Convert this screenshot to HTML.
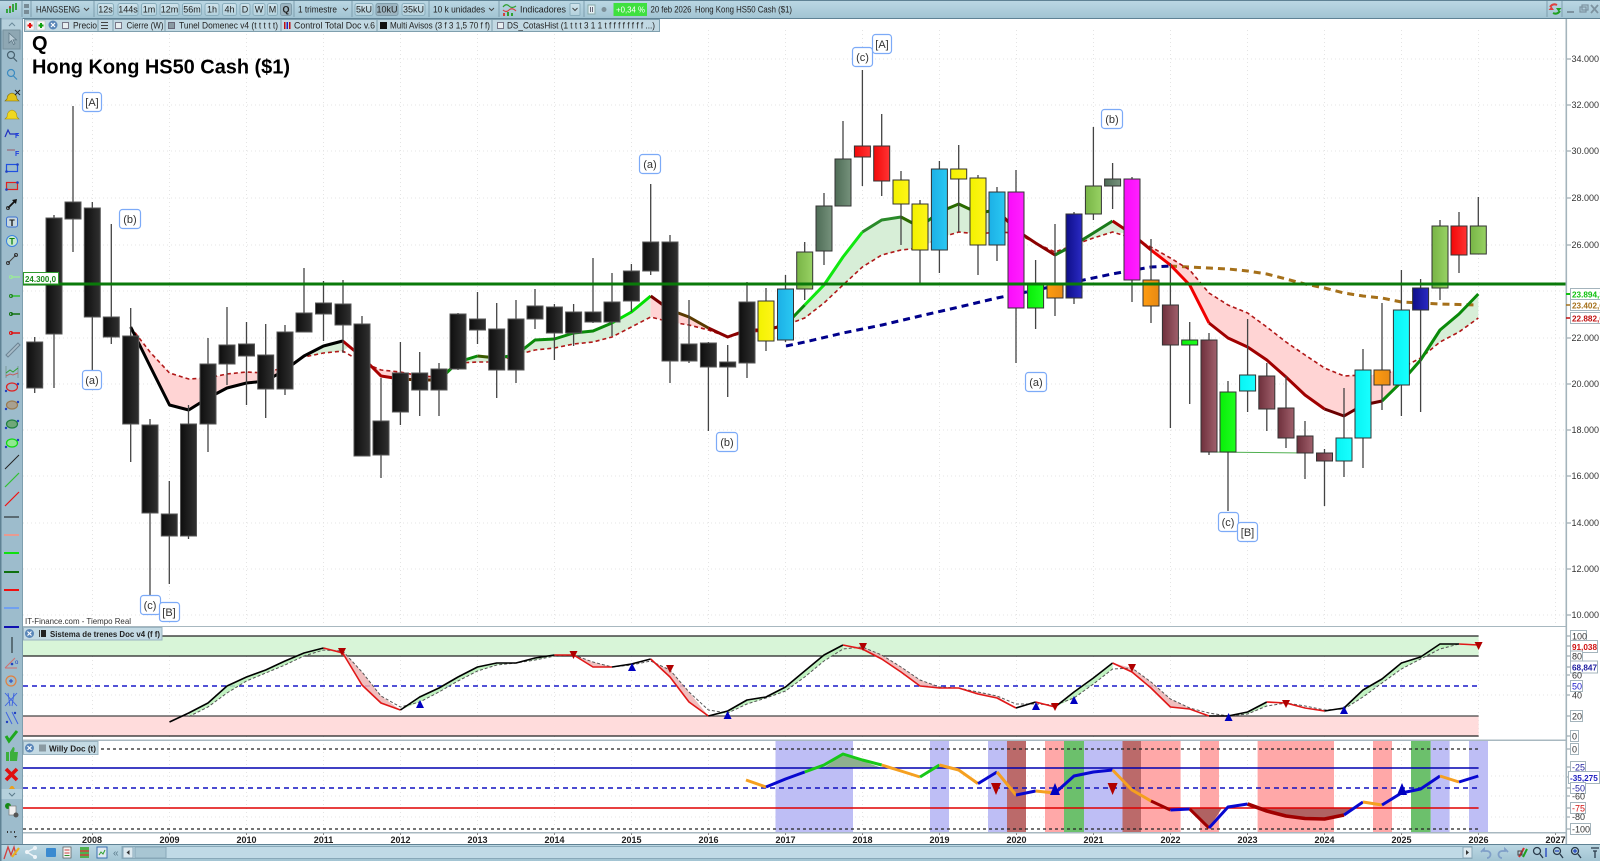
<!DOCTYPE html>
<html lang="es"><head><meta charset="utf-8"><title>Hong Kong HS50 Cash</title>
<style>
html,body{margin:0;padding:0;background:#fff;width:1600px;height:861px;overflow:hidden}
svg{display:block;font-family:"Liberation Sans",sans-serif}
.t{font-size:9px;fill:#222}
.b{font-size:8.5px;fill:#222;font-weight:bold}
.p{font-size:9px;fill:#333}
.x{font-size:9px;fill:#222;font-weight:bold;text-anchor:middle}
.a{font-size:11px;fill:#333;text-anchor:middle}
.btn{fill:url(#bt);stroke:#8aaebd;stroke-width:1}
.act{fill:#9db5c1;stroke:#7f9dab;stroke-width:1}
.ann{fill:#fff;stroke:#7caaf7;stroke-width:1.2}
.sep{stroke:#7d9eae;stroke-width:1}
.lab{fill:#fff;stroke:#a4b4bc;stroke-width:1}
</style></head><body>
<svg width="1600" height="861" viewBox="0 0 1600 861" xmlns="http://www.w3.org/2000/svg">
<defs>
<linearGradient id="bar" x1="0" y1="0" x2="0" y2="1"><stop offset="0" stop-color="#bcd8e4"/><stop offset="1" stop-color="#a2c4d3"/></linearGradient>
<linearGradient id="bt" x1="0" y1="0" x2="0" y2="1"><stop offset="0" stop-color="#d0e4ec"/><stop offset="1" stop-color="#b2d0dc"/></linearGradient>
<linearGradient id="k"><stop offset="0" stop-color="#0e0e0e"/><stop offset="1" stop-color="#303030"/></linearGradient>
<linearGradient id="y"><stop offset="0" stop-color="#f2f200"/><stop offset="1" stop-color="#fff418"/></linearGradient>
<linearGradient id="bl"><stop offset="0" stop-color="#1cb0e6"/><stop offset="1" stop-color="#2ac8f2"/></linearGradient>
<linearGradient id="m"><stop offset="0" stop-color="#fa0cfa"/><stop offset="1" stop-color="#ff20ff"/></linearGradient>
<linearGradient id="g"><stop offset="0" stop-color="#08ee08"/><stop offset="1" stop-color="#20ff20"/></linearGradient>
<linearGradient id="o"><stop offset="0" stop-color="#ff9c10"/><stop offset="1" stop-color="#e88a14"/></linearGradient>
<linearGradient id="n"><stop offset="0" stop-color="#0e0e88"/><stop offset="1" stop-color="#2a2ac4"/></linearGradient>
<linearGradient id="l"><stop offset="0" stop-color="#78b446"/><stop offset="1" stop-color="#98d264"/></linearGradient>
<linearGradient id="d"><stop offset="0" stop-color="#4e6c56"/><stop offset="1" stop-color="#76927c"/></linearGradient>
<linearGradient id="r"><stop offset="0" stop-color="#f20808"/><stop offset="1" stop-color="#ff3434"/></linearGradient>
<linearGradient id="t"><stop offset="0" stop-color="#6e303c"/><stop offset="1" stop-color="#a0606c"/></linearGradient>
<linearGradient id="c"><stop offset="0" stop-color="#08f4f4"/><stop offset="1" stop-color="#18ffff"/></linearGradient>
</defs>
<rect width="1600" height="861" fill="#fff"/>

<!-- grid -->
<g stroke="#e4e4e4" stroke-width="1" stroke-dasharray="1 3" fill="none">
<path d="M23 59H1566M23 105H1566M23 151H1566M23 198H1566M23 245H1566M23 291H1566M23 338H1566M23 384H1566M23 430H1566M23 476H1566M23 523H1566M23 569H1566M23 615H1566"/>
<path d="M92.5 30V627M169.5 30V627M246.5 30V627M323.5 30V627M400.5 30V627M477.5 30V627M554.5 30V627M631.5 30V627M708.5 30V627M785.5 30V627M862.5 30V627M939.5 30V627M1016.5 30V627M1093.5 30V627M1170.5 30V627M1247.5 30V627M1324.5 30V627M1401.5 30V627M1478.5 30V627M1555.5 30V627"/>
<path d="M92.5 640V832M169.5 640V832M246.5 640V832M323.5 640V832M400.5 640V832M477.5 640V832M554.5 640V832M631.5 640V832M708.5 640V832M785.5 640V832M862.5 640V832M939.5 640V832M1016.5 640V832M1093.5 640V832M1170.5 640V832M1247.5 640V832M1324.5 640V832M1401.5 640V832M1478.5 640V832"/>
<path d="M23 675H1566M23 695H1566M23 776H1566M23 796H1566M23 817H1566"/>
</g>

<!-- tunnel fills -->
<polygon fill="#ffd4d4" points="130.7,327 150,366 169.5,405 188.7,410 208,398 227,388 246.5,383 265.7,381 285,370 290,365 285,367 265.7,373 246.5,372 227,374 208,378 188.7,379 169.5,373 150,352"/>
<polygon fill="#d7eed7" points="300,358 304,356 323.5,346 342.7,341 350,346 342.7,351 323.5,353 304,357"/>
<polygon fill="#ffd4d4" points="350,346 362,357 381,376 400.4,379 419.7,380 439,380 458,362 458,363 439,377 419.7,376 400.4,372 381,370 362,362"/>
<polygon fill="#d7eed7" points="458,363 477.5,356 496.7,358 516,355 535,340 554.4,339 573.6,333 593,331 612,323 631.4,312 650.7,296 650.7,317 631.4,327 612,337 593,342 573.6,344 554.4,348 535,350 516,355 496.7,362 477.5,362"/>
<polygon fill="#ffd4d4" points="650.7,296 670,310 689,317 708.4,328 727.7,337 708.4,330 689,325 670,322 650.7,317"/>
<polygon fill="#d7eed7" points="785.5,325 804.7,305 824,285 843,257 862.4,232 881.7,220 901,217 920,227 939.4,212 958.7,204 978,213 997,210 1016,230 1035.6,243 1016,233 997,232 978,234 958.7,232 939.4,238 920,248 901,250 881.7,255 862.4,267 843,285 824,303 804.7,318"/>
<polygon fill="#ffd4d4" points="1035.6,243 1055,255 1074,245 1055,252"/>
<polygon fill="#d7eed7" points="1074,245 1093.4,233 1112.6,221 1132,234 1112.6,232 1093.4,238"/>
<polygon fill="#ffd4d4" points="1132,234 1151,250 1170.4,265 1189.7,285 1209,323 1228,338 1247.6,347 1266.8,360 1286,377 1305,395 1324.5,409 1344,416 1363,405 1382,401 1410,372 1401.4,368 1382,375 1363,375 1344,376 1324.5,368 1305,355 1286,342 1266.8,327 1247.6,313 1228,305 1209,293 1189.7,270 1170.4,258 1151,247"/>
<polygon fill="#d7eed7" points="1415,364 1420.6,360 1440,330 1459,314 1478.3,294 1478.3,318 1459,332 1440,342 1420.6,358"/>

<!-- long dashed MAs -->
<path d="M786 346L805 342 843 333 882 325 920 316 959 307 997 298 1036 290 1074 282 1112 274 1151 267 1170 266" fill="none" stroke="#00008b" stroke-width="3" stroke-dasharray="7 5"/>
<path d="M1170 266L1190 267 1209 268 1228 269 1247.6 271 1266.8 274 1286 279 1305 284 1324.5 288 1344 293 1363 296 1382 298 1401.4 302 1420.6 303 1440 304 1459 304.5 1478.3 305" fill="none" stroke="#a5701a" stroke-width="3" stroke-dasharray="7 5"/>

<!-- dashed slow tunnel line -->
<polyline fill="none" stroke="#b01818" stroke-width="1.6" stroke-dasharray="4 3" points="130.7,327 150,352 169.5,373 188.7,379 208,378 227,374 246.5,372 265.7,373 285,367 304,357 323.5,353 342.7,351 362,362 381,370 400.4,372 419.7,376 439,377 458,363 477.5,362 496.7,362 516,355 535,350 554.4,348 573.6,344 593,342 612,337 631.4,327 650.7,317 670,322 689,325 708.4,330 727.7,337 747,332 766,331 785.5,325 804.7,318 824,303 843,285 862.4,267 881.7,255 901,250 920,248 939.4,238 958.7,232 978,234 997,232 1016,233 1035.6,243 1055,252 1074,245 1093.4,238 1112.6,232 1132,238 1151,247 1170.4,258 1189.7,270 1209,293 1228,305 1247.6,313 1266.8,327 1286,342 1305,355 1324.5,368 1344,376 1363,375 1382,375 1401.4,368 1420.6,358 1440,342 1459,332 1478.3,318"/>

<!-- solid tunnel line -->
<g fill="none" stroke-width="3" stroke-linejoin="round">
<polyline stroke="#000" points="130.7,327 150,366 169.5,405 188.7,410 208,398 227,388 246.5,383 265.7,381 285,370 304,356 323.5,346 342.7,341"/>
<polyline stroke="#a80000" points="342.7,341 362,357 381,376 400.4,379"/>
<polyline stroke="#5a2a00" points="400.4,379 419.7,380 439,380"/>
<polyline stroke="#0a8a0a" points="439,380 458,362 477.5,356"/>
<polyline stroke="#3a5a00" points="477.5,356 496.7,358"/>
<polyline stroke="#0a8a0a" points="496.7,358 516,355 535,340 554.4,339 573.6,333 593,331 612,323"/>
<polyline stroke="#00e000" points="612,323 631.4,312 650.7,296"/>
<polyline stroke="#7a0000" points="650.7,296 670,310"/>
<polyline stroke="#5a3a00" points="670,310 689,317 708.4,328"/>
<polyline stroke="#8a0000" points="708.4,328 727.7,337 747,330 766,330 785.5,325"/>
<polyline stroke="#0a8a0a" points="785.5,325 804.7,305"/>
<polyline stroke="#10e810" points="804.7,305 824,285 843,257 862.4,232"/>
<polyline stroke="#2a8a2a" points="862.4,232 881.7,220 901,217"/>
<polyline stroke="#2a6a00" points="901,217 920,227"/>
<polyline stroke="#0c8c0c" points="920,227 939.4,212"/>
<polyline stroke="#2a6a00" points="939.4,212 958.7,204 978,213 997,210"/>
<polyline stroke="#8a0000" points="997,210 1016,230 1035.6,243 1055,255"/>
<polyline stroke="#1a7a1a" points="1055,255 1074,245 1093.4,233 1112.6,221"/>
<polyline stroke="#a80000" points="1112.6,221 1132,234 1151,250"/>
<polyline stroke="#f00000" points="1151,250 1170.4,265 1189.7,285 1209,323"/>
<polyline stroke="#a00000" points="1209,323 1228,338 1247.6,347 1266.8,360 1286,377 1305,395 1324.5,409"/>
<polyline stroke="#6a0000" points="1324.5,409 1344,416 1363,405 1382,401"/>
<polyline stroke="#0a8a0a" points="1382,401 1401.4,382 1420.6,360 1440,330 1459,314 1478.3,294"/>
</g>
<path d="M1209 452L1305 453" stroke="#50b050" stroke-width="1" fill="none"/>

<!-- wicks -->
<path fill="none" stroke="#444" stroke-width="1.3" d="M34.7 337V393M54 215V388M73 106V252M92.3 202V372M111.3 224V344M130.7 308V462M150 419V600M169.3 481V584M188.5 405V539M208 338V452M227 307V385M246.5 322V405M265.7 324V418M285 325V395M304 268V332M323.5 281V341M343 280V353M362 316V456M381 378V478M400.4 342V425M419.7 352V416M439 363V416M458 313V370M477.5 292V344M496.7 303V398M516 300V383M535 289V329M554.4 304V360M573.6 304V346M593 258V323M612 273V336M631.4 264V312M650.7 184V275M670 235V383M689 300V363M708.4 342V431M727.7 345V397M747 282V378M766 288V351M785.5 275V342M804.7 242V300M824 193V265M843 121V206M862.4 70V186M881.7 114V196M901 171V245M920 200V283M939.4 161V273M958.7 145V232M978 175V275M997 187V261M1016 170V363M1035.6 260V329M1055 224V316M1074 212V304M1093.4 127V220M1112.6 163V209M1132 177V302M1151 239V323M1170.4 263V428M1189.7 322V404M1209 333V455M1228 381V511M1247.6 319V412M1266.8 363V431M1286 376V448M1305 421V479M1324.5 449V506M1344 388V477M1363 349V468M1382 303V410M1401.4 270V416M1420.6 279V412M1440 220V300M1459 212V273M1478.3 197V254"/>

<!-- bodies -->
<g stroke="#555" stroke-width="1">
<g fill="url(#k)">
<rect x="26.7" y="342" width="16" height="46"/><rect x="46" y="218" width="16" height="116"/><rect x="65" y="202" width="16" height="17"/><rect x="84.3" y="208" width="16" height="109"/><rect x="103.3" y="317" width="16" height="20"/><rect x="122.7" y="336" width="16" height="88"/><rect x="142" y="425" width="16" height="88"/><rect x="161.3" y="514" width="16" height="22"/><rect x="180.5" y="424" width="16" height="112"/><rect x="200" y="364" width="16" height="60"/><rect x="219" y="345" width="16" height="19"/><rect x="238.5" y="344" width="16" height="12"/><rect x="257.7" y="355" width="16" height="34"/><rect x="277" y="332" width="16" height="57"/><rect x="296" y="313" width="16" height="19"/><rect x="315.5" y="303" width="16" height="11"/><rect x="335" y="304" width="16" height="21"/><rect x="354" y="324" width="16" height="132"/><rect x="373" y="421" width="16" height="34"/><rect x="392.4" y="373" width="16" height="39"/><rect x="411.7" y="373" width="16" height="17"/><rect x="431" y="369" width="16" height="21"/><rect x="450" y="314" width="16" height="55"/><rect x="469.5" y="319" width="16" height="11"/><rect x="488.7" y="329" width="16" height="41"/><rect x="508" y="319" width="16" height="51"/><rect x="527" y="306" width="16" height="13"/><rect x="546.4" y="307" width="16" height="26"/><rect x="565.6" y="312" width="16" height="21"/><rect x="585" y="312" width="16" height="10"/><rect x="604" y="302" width="16" height="20"/><rect x="623.4" y="271" width="16" height="30"/><rect x="642.7" y="242" width="16" height="29"/><rect x="662" y="242" width="16" height="119"/><rect x="681" y="344" width="16" height="17"/><rect x="700.4" y="343" width="16" height="24"/><rect x="719.7" y="362" width="16" height="5"/><rect x="739" y="302" width="16" height="61"/>
</g>
<g stroke="#333">
<g fill="url(#y)"><rect x="758" y="301" width="16" height="40"/><rect x="893" y="180" width="16" height="24"/><rect x="912" y="204" width="16" height="46"/><rect x="950.7" y="169" width="16" height="10"/><rect x="970" y="178" width="16" height="67"/></g>
<g fill="url(#bl)"><rect x="777.5" y="289" width="16" height="51"/><rect x="931.4" y="169" width="16" height="81"/><rect x="989" y="192" width="16" height="53"/></g>
<g fill="url(#l)"><rect x="796.7" y="252" width="16" height="37"/><rect x="1085.4" y="186" width="16" height="28"/><rect x="1432" y="226" width="16" height="62"/><rect x="1470.3" y="226" width="16" height="28"/></g>
<g fill="url(#d)"><rect x="816" y="206" width="16" height="45"/><rect x="835" y="159" width="16" height="47"/><rect x="1104.6" y="179" width="16" height="7"/></g>
<g fill="url(#r)"><rect x="854.4" y="146" width="16" height="11"/><rect x="873.7" y="146" width="16" height="35"/><rect x="1451" y="226" width="16" height="29"/></g>
<g fill="url(#m)"><rect x="1008" y="192" width="16" height="116"/><rect x="1124" y="179" width="16" height="101"/></g>
<g fill="url(#g)"><rect x="1027.6" y="285" width="16" height="23"/><rect x="1181.7" y="340" width="16" height="5"/><rect x="1220" y="392" width="16" height="60"/></g>
<g fill="url(#o)"><rect x="1047" y="283" width="16" height="15"/><rect x="1143" y="280" width="16" height="26"/><rect x="1374" y="370" width="16" height="15"/></g>
<g fill="url(#n)"><rect x="1066" y="214" width="16" height="84"/><rect x="1412.6" y="288" width="16" height="22"/></g>
<g fill="url(#t)"><rect x="1162.4" y="305" width="16" height="40"/><rect x="1201" y="340" width="16" height="112"/><rect x="1258.8" y="376" width="16" height="33"/><rect x="1278" y="408" width="16" height="30"/><rect x="1297" y="436" width="16" height="17"/><rect x="1316.5" y="453" width="16" height="8"/></g>
<g fill="url(#c)"><rect x="1239.6" y="375" width="16" height="16"/><rect x="1336" y="438" width="16" height="23"/><rect x="1355" y="370" width="16" height="68"/><rect x="1393.4" y="310" width="16" height="75"/></g>
</g>
</g>

<!-- main horizontal -->
<rect x="23" y="282.5" width="1543" height="3" fill="#0a7a0a"/>
<rect x="23.5" y="272.5" width="35" height="11.5" fill="#fff" stroke="#2e9a2e"/>
<text x="25" y="282" font-size="8.5" font-weight="bold" fill="#1a8a1a" textLength="31" lengthAdjust="spacingAndGlyphs">24.300,0</text>

<!-- annotations -->
<g>
<rect class="ann" x="82.5" y="92.5" width="19" height="19" rx="3"/><text class="a" x="92" y="106">[A]</text>
<rect class="ann" x="119.5" y="209.5" width="21" height="19" rx="3"/><text class="a" x="130" y="223">(b)</text>
<rect class="ann" x="82.5" y="370.5" width="19" height="19" rx="3"/><text class="a" x="92" y="384">(a)</text>
<rect class="ann" x="140.5" y="595.5" width="20" height="19" rx="3"/><text class="a" x="150" y="609">(c)</text>
<rect class="ann" x="159.5" y="602.5" width="20" height="19" rx="3"/><text class="a" x="169" y="616">[B]</text>
<rect class="ann" x="639.5" y="154.5" width="21" height="19" rx="3"/><text class="a" x="650" y="168">(a)</text>
<rect class="ann" x="716.5" y="432.5" width="21" height="19" rx="3"/><text class="a" x="727" y="446">(b)</text>
<rect class="ann" x="852.5" y="47.5" width="20" height="19" rx="3"/><text class="a" x="862.5" y="61">(c)</text>
<rect class="ann" x="872.5" y="34.5" width="19" height="19" rx="3"/><text class="a" x="882" y="48">[A]</text>
<rect class="ann" x="1101.5" y="109.5" width="21" height="19" rx="3"/><text class="a" x="1112" y="123">(b)</text>
<rect class="ann" x="1025.5" y="372.5" width="21" height="19" rx="3"/><text class="a" x="1036" y="386">(a)</text>
<rect class="ann" x="1218.5" y="512.5" width="20" height="19" rx="3"/><text class="a" x="1228" y="526">(c)</text>
<rect class="ann" x="1237.5" y="522.5" width="20" height="19" rx="3"/><text class="a" x="1247.5" y="536">[B]</text>
</g>

<text x="32" y="50" font-size="20" font-weight="bold" fill="#000">Q</text>
<text x="32" y="73.5" font-size="20" font-weight="bold" fill="#000" textLength="258">Hong Kong HS50 Cash ($1)</text>
<text x="25" y="624" font-size="8.6" fill="#333" textLength="106" lengthAdjust="spacingAndGlyphs">IT-Finance.com - Tiempo Real</text>

<!-- pane 2 -->
<rect x="23" y="626" width="1543" height="1" fill="#a8b8c0"/>
<rect x="23" y="636" width="1455.6" height="20" fill="#d8f5d8"/>
<rect x="23" y="716" width="1455.6" height="20" fill="#ffdcdc"/>
<g stroke-width="1.2" fill="none">
<path d="M23 636H1478.6M23 656H1478.6M23 736H1478.6" stroke="#222"/>
<path d="M23 716H1478.6" stroke="#444"/>
<path d="M23 686H1478.6" stroke="#1818c8" stroke-width="1.6" stroke-dasharray="5 4"/>
</g>
<g opacity=".85">
<polygon fill="#b6f0b6" points="188.7,713 208,703 227,686 246.5,677 265.7,670 285,661 304,653 323.5,648 323.5,650 304,656 285,665 265.7,673 246.5,681 227,693 208,707 188.7,716.6"/>
<polygon fill="#eeb4b4" points="323.5,648 342.7,653 362,685 381,703 400.4,710 381,696 362,672 342.7,651"/>
<polygon fill="#b6f0b6" points="400.4,710 419.7,697 439,688 458,677 477.5,667 496.7,663 516,663 535,658 554.4,655 554.4,656 535,660 516,663 496.7,665 477.5,671 458,681 439,692 419.7,702"/>
<polygon fill="#eeb4b4" points="554.4,655 573.6,655 593,667 612,667 593,662 573.6,655"/>
<polygon fill="#eeb4b4" points="650.7,659 670,677 689,702 708.4,716 689,692 670,670 650.7,661"/>
<polygon fill="#b6f0b6" points="708.4,716 727.7,711 747,700 766,697 785.5,687 804.7,671 824,655 843,645 843,649 824,661 804.7,677 785.5,691 766,698 747,704 727.7,713"/>
<polygon fill="#eeb4b4" points="843,645 862.4,649 881.7,659 901,672 920,686 939.4,688 958.7,688 978,694 997,698 1016,708 997,696 978,692 958.7,688 939.4,687 920,680 901,667 881.7,655 862.4,647"/>
<polygon fill="#b6f0b6" points="1055,707 1074,692 1093.4,678 1112.6,663 1112.6,669 1093.4,684 1074,698"/>
<polygon fill="#eeb4b4" points="1112.6,663 1132,672 1151,688 1170.4,707 1189.7,709 1209,716 1189.7,708 1170.4,699 1151,682 1132,668"/>
<polygon fill="#b6f0b6" points="1228,716 1247.6,712 1266.8,702 1266.8,706 1247.6,714"/>
<polygon fill="#b6f0b6" points="1324.5,711 1344,708 1363,690 1382,679 1401.4,663 1420.6,657 1440,644 1459,644 1440,649 1420.6,659 1401.4,669 1382,683 1363,697 1344,709"/>
</g>
<polyline fill="none" stroke="#555" stroke-width="1" stroke-dasharray="3 2" points="188.7,716.6 208,707 227,693 246.5,681 265.7,673 285,665 304,656 323.5,650 342.7,651 362,672 381,696 400.4,707 419.7,702 439,692 458,681 477.5,671 496.7,665 516,663 535,660 554.4,656 573.6,655 593,662 612,667 631.4,665 650.7,661 670,670 689,692 708.4,710 727.7,713 747,704 766,698 785.5,691 804.7,677 824,661 843,649 862.4,647 881.7,655 901,667 920,680 939.4,687 958.7,688 978,692 997,696 1016,704 1035.6,704 1055,705 1074,698 1093.4,684 1112.6,669 1132,668 1151,682 1170.4,699 1189.7,708 1209,713 1228,716 1247.6,714 1266.8,706 1286,703 1305,706 1324.5,710 1344,709 1363,697 1382,683 1401.4,669 1420.6,659 1440,649 1459,644 1478.3,645"/>
<g fill="none" stroke-width="1.6" stroke-linejoin="round">
<polyline stroke="#000" points="169.5,722 188.7,713 208,703 227,686 246.5,677 265.7,670 285,661 304,653 323.5,648"/>
<polyline stroke="#e01818" points="323.5,648 342.7,653 362,685 381,703 400.4,710"/>
<polyline stroke="#000" points="400.4,710 419.7,697 439,688 458,677 477.5,667 496.7,663 516,663 535,658 554.4,655"/>
<polyline stroke="#e01818" points="554.4,655 573.6,655 593,667 612,667"/>
<polyline stroke="#000" points="612,667 631.4,664 650.7,659"/>
<polyline stroke="#e01818" points="650.7,659 670,677 689,702 708.4,716"/>
<polyline stroke="#000" points="708.4,716 727.7,711 747,700 766,697 785.5,687 804.7,671 824,655 843,645"/>
<polyline stroke="#e01818" points="843,645 862.4,649 881.7,659 901,672 920,686 939.4,688 958.7,688 978,694 997,698 1016,708"/>
<polyline stroke="#000" points="1016,708 1035.6,702"/>
<polyline stroke="#e01818" points="1035.6,702 1055,707"/>
<polyline stroke="#000" points="1055,707 1074,692 1093.4,678 1112.6,663"/>
<polyline stroke="#e01818" points="1112.6,663 1132,672 1151,688 1170.4,707 1189.7,709 1209,716"/>
<polyline stroke="#000" points="1209,716 1228,716 1247.6,712 1266.8,702"/>
<polyline stroke="#e01818" points="1266.8,702 1286,703 1305,708 1324.5,711"/>
<polyline stroke="#000" points="1324.5,711 1344,708 1363,690 1382,679 1401.4,663 1420.6,657 1440,644 1459,644"/>
<polyline stroke="#e01818" points="1459,644 1478.3,645"/>
</g>
<g fill="#b00000">
<path d="M338 648h8l-4 8z"/><path d="M569.5 651h8l-4 8z"/><path d="M666 665h8l-4 8z"/><path d="M859 643h8l-4 8z"/><path d="M1051 703h8l-4 8z"/><path d="M1128 664h8l-4 8z"/><path d="M1282 700h8l-4 8z"/><path d="M1474.6 642h8l-4 8z"/>
</g>
<g fill="#0000c0">
<path d="M416 708h8l-4-8z"/><path d="M628 671h8l-4-8z"/><path d="M723.6 719h8l-4-8z"/><path d="M1032 710h8l-4-8z"/><path d="M1070 704h8l-4-8z"/><path d="M1224.6 721h8l-4-8z"/><path d="M1340 714h8l-4-8z"/>
</g>

<!-- pane 3 -->
<rect x="23" y="739.5" width="1543" height="1.5" fill="#a8b8c0"/>
<g fill="#bebef5">
<rect x="775.5" y="741" width="77.5" height="91"/><rect x="930" y="741" width="19" height="91"/><rect x="988" y="741" width="19" height="91"/><rect x="1084" y="741" width="38.5" height="91"/><rect x="1430.6" y="741" width="19" height="91"/><rect x="1469" y="741" width="19" height="91"/>
</g>
<g fill="#bb6a6a"><rect x="1007" y="741" width="19" height="91"/><rect x="1122.5" y="741" width="18.5" height="91"/></g>
<g fill="#ffa8a8"><rect x="1045" y="741" width="19" height="91"/><rect x="1141" y="741" width="39.6" height="91"/><rect x="1200" y="741" width="19" height="91"/><rect x="1257.6" y="741" width="76.4" height="91"/><rect x="1373" y="741" width="19" height="91"/></g>
<g fill="#6cc06c"><rect x="1064" y="741" width="20" height="91"/><rect x="1411" y="741" width="19.6" height="91"/></g>
<polygon fill="#8fb08f" points="824,768 843,754 882,768"/>
<polygon fill="#b06262" points="1190,808 1209,828 1222,808"/>
<polygon fill="#b06262" points="1254,808 1267,811 1286,816 1305,818.5 1324.5,819 1344,815 1352,808"/>
<g fill="none">
<path d="M23 749H1478.6M23 829H1478.6" stroke="#222" stroke-width="1.3" stroke-dasharray="3 3"/>
<path d="M23 768H1478.6" stroke="#0000b0" stroke-width="1.5"/>
<path d="M23 788H1478.6" stroke="#1010c0" stroke-width="1.6" stroke-dasharray="5 4"/>
<path d="M23 808H1478.6" stroke="#e00000" stroke-width="1.5"/>
</g>
<g fill="none" stroke-width="3" stroke-linejoin="round">
<polyline stroke="#f5a020" points="746,780 766,787"/>
<polyline stroke="#0808d0" points="766,787 785.5,779 804.7,772"/>
<polyline stroke="#18c818" points="804.7,772 824,765 843,754 862.4,760 881.7,765"/>
<polyline stroke="#f5a020" points="881.7,765 901,771 920,777"/>
<polyline stroke="#18c818" points="920,777 939.4,765"/>
<polyline stroke="#f5a020" points="939.4,765 958.7,770 978,783.6"/>
<polyline stroke="#0808d0" points="978,783.6 997,772"/>
<polyline stroke="#f5a020" points="997,772 1016,795"/>
<polyline stroke="#0808d0" points="1016,795 1035.6,791"/>
<polyline stroke="#f5a020" points="1035.6,791 1055,793"/>
<polyline stroke="#0808d0" points="1055,793 1074,776 1093.4,772 1112.6,770"/>
<polyline stroke="#f5a020" points="1112.6,770 1132,790 1151,801"/>
<polyline stroke="#a00000" points="1151,801 1170.4,810"/>
<polyline stroke="#0808d0" points="1170.4,810 1189.7,809"/>
<polyline stroke="#a00000" points="1189.7,809 1209,828"/>
<polyline stroke="#0808d0" points="1209,828 1228,807 1247.6,804"/>
<polyline stroke="#a00000" stroke-width="3.6" points="1247.6,804 1266.8,811 1286,816 1305,818.5 1324.5,819 1344,815"/>
<polyline stroke="#0808d0" points="1344,815 1363,802"/>
<polyline stroke="#f5a020" points="1363,802 1382,805"/>
<polyline stroke="#0808d0" points="1382,805 1401.4,793 1420.6,789 1440,776"/>
<polyline stroke="#f5a020" points="1440,776 1459,782"/>
<polyline stroke="#0808d0" points="1459,782 1478.3,776"/>
</g>
<g fill="#b00000"><path d="M991 783h10l-5 12z"/><path d="M1107.6 783h10l-5 12z"/></g>
<g fill="#0000c0"><path d="M1050 795h10l-5-12z"/><path d="M1397 795h10l-5-12z"/></g>

<!-- x axis -->
<rect x="23" y="832" width="1543" height="1.5" fill="#a8b8c0"/>
<g stroke="#888" stroke-width="1"><path d="M92.5 833v2M169.5 833v2M246.5 833v2M323.5 833v2M400.5 833v2M477.5 833v2M554.5 833v2M631.5 833v2M708.5 833v2M785.5 833v2M862.5 833v2M939.5 833v2M1016.5 833v2M1093.5 833v2M1170.5 833v2M1247.5 833v2M1324.5 833v2M1401.5 833v2M1478.5 833v2M1555.5 833v2"/></g>
<g>
<text class="x" x="92" y="843">2008</text><text class="x" x="169.5" y="843">2009</text><text class="x" x="246.5" y="843">2010</text><text class="x" x="323.5" y="843">2011</text><text class="x" x="400.5" y="843">2012</text><text class="x" x="477.5" y="843">2013</text><text class="x" x="554.5" y="843">2014</text><text class="x" x="631.5" y="843">2015</text><text class="x" x="708.5" y="843">2016</text><text class="x" x="785.5" y="843">2017</text><text class="x" x="862.5" y="843">2018</text><text class="x" x="939.5" y="843">2019</text><text class="x" x="1016.5" y="843">2020</text><text class="x" x="1093.5" y="843">2021</text><text class="x" x="1170.5" y="843">2022</text><text class="x" x="1247.5" y="843">2023</text><text class="x" x="1324.5" y="843">2024</text><text class="x" x="1401.5" y="843">2025</text><text class="x" x="1478.5" y="843">2026</text><text class="x" x="1555.5" y="843">2027</text>
</g>

<!-- right axis -->
<rect x="1565.5" y="18" width="1.6" height="826" fill="#a4b4bc"/>
<path stroke="#8a9aa2" stroke-width="1" d="M1567 59h4M1567 105h4M1567 151h4M1567 198h4M1567 245h4M1567 338h4M1567 384h4M1567 430h4M1567 476h4M1567 523h4M1567 569h4M1567 615h4M1567 636h3M1567 646h3M1567 656h3M1567 667h3M1567 675h3M1567 686h3M1567 695h3M1567 716h3M1567 736h3M1567 749h3M1567 767h3M1567 777h3M1567 788h3M1567 796h3M1567 808h3M1567 817h3M1567 829h3"/>
<g>
<text class="p" x="1571.5" y="62">34.000</text><text class="p" x="1571.5" y="108">32.000</text><text class="p" x="1571.5" y="154">30.000</text><text class="p" x="1571.5" y="201">28.000</text><text class="p" x="1571.5" y="248">26.000</text><text class="p" x="1571.5" y="341">22.000</text><text class="p" x="1571.5" y="387">20.000</text><text class="p" x="1571.5" y="433">18.000</text><text class="p" x="1571.5" y="479">16.000</text><text class="p" x="1571.5" y="526">14.000</text><text class="p" x="1571.5" y="572">12.000</text><text class="p" x="1571.5" y="618">10.000</text>
</g>
<path d="M1566 294h4" stroke="#10c010" stroke-width="2"/><path d="M1566 305h4" stroke="#a5701a" stroke-width="1.5"/><path d="M1566 318h4" stroke="#c01010" stroke-width="1.5"/>
<rect class="lab" x="1570.5" y="288.5" width="32" height="11"/><text x="1572" y="297.5" font-size="8.2" font-weight="bold" fill="#10c010">23.894,3</text>
<rect class="lab" x="1570.5" y="299.5" width="32" height="11"/><text x="1572" y="308.5" font-size="8.2" font-weight="bold" fill="#a5701a">23.402,6</text>
<rect class="lab" x="1570.5" y="312.5" width="32" height="11"/><text x="1572" y="321.5" font-size="8.2" font-weight="bold" fill="#c01010">22.882,0</text>

<g class="p">
<rect class="lab" x="1570.5" y="630.5" width="16" height="11"/><text class="p" x="1572" y="639.5">100</text>
<rect class="lab" x="1570.5" y="640.5" width="27" height="12"/><text x="1572" y="650" font-size="8.2" font-weight="bold" fill="#d01010">91,038</text>
<rect class="lab" x="1570.5" y="651" width="12" height="11"/><text class="p" x="1572" y="659.5">80</text>
<rect class="lab" x="1570.5" y="661" width="27" height="12"/><text x="1572" y="670.5" font-size="8.2" font-weight="bold" fill="#2020a0">68,847</text>
<text class="p" x="1572" y="678.5">60</text>
<rect class="lab" x="1570.5" y="680.5" width="12" height="11"/><text x="1572" y="689.5" font-size="9" fill="#1818c8">50</text>
<text class="p" x="1572" y="698.5">40</text>
<rect class="lab" x="1570.5" y="710.5" width="12" height="11"/><text class="p" x="1572" y="719.5">20</text>
<rect class="lab" x="1570.5" y="730.5" width="8" height="11"/><text class="p" x="1572" y="739.5">0</text>
<rect class="lab" x="1570.5" y="743.5" width="8" height="11"/><text class="p" x="1572" y="752.5">0</text>
<rect class="lab" x="1570.5" y="761.5" width="15" height="11"/><text x="1572" y="770.5" font-size="9" fill="#2020a0">-25</text>
<rect class="lab" x="1568.5" y="771.5" width="31" height="12"/><text x="1570" y="781" font-size="8.2" font-weight="bold" fill="#2020c0">-35,275</text>
<rect class="lab" x="1570.5" y="782.5" width="15" height="11"/><text x="1572" y="791.5" font-size="9" fill="#2020a0">-50</text>
<text class="p" x="1572" y="799.5">-60</text>
<rect class="lab" x="1570.5" y="802.5" width="15" height="11"/><text x="1572" y="811.5" font-size="9" fill="#d01010">-75</text>
<text class="p" x="1572" y="820">-80</text>
<rect class="lab" x="1570.5" y="823.5" width="20" height="11"/><text class="p" x="1572" y="832.5">-100</text>
</g>

<!-- pane tabs -->
<rect x="23.5" y="627.5" width="138.5" height="12.5" fill="#c4dae4" stroke="#9ab4c1"/>
<circle cx="29.5" cy="633.5" r="4.5" fill="#5a86b8"/><path d="M27.5 631.5l4 4m0-4l-4 4" stroke="#fff" stroke-width="1.2"/>
<rect x="39" y="630" width="1" height="7" fill="#444"/><rect x="41" y="630" width="5" height="7" fill="#222"/>
<text class="b" x="50" y="637" textLength="110" lengthAdjust="spacingAndGlyphs">Sistema de trenes Doc v4 (f f)</text>
<rect x="23.5" y="741.5" width="74.5" height="13" fill="#c4dae4" stroke="#9ab4c1"/>
<circle cx="29.5" cy="748" r="4.5" fill="#5a86b8"/><path d="M27.5 746l4 4m0-4l-4 4" stroke="#fff" stroke-width="1.2"/>
<rect x="39" y="744.5" width="7" height="7" fill="#8a9aa2"/>
<text class="b" x="49" y="751.5" textLength="47" lengthAdjust="spacingAndGlyphs">Willy Doc (t)</text>

<!-- legend row -->
<rect x="0" y="18" width="1600" height="1" fill="#5f8294"/>
<rect x="24.5" y="19.5" width="635" height="12" fill="#c2d9e3" stroke="#7f9fae"/>
<rect x="26" y="21" width="8" height="9" fill="#f4f4f4" stroke="#bbb" stroke-width=".5"/><path d="M27.5 25.5h5m-2.5-2.5v5" stroke="#e01010" stroke-width="2"/>
<rect x="37" y="21" width="8" height="9" fill="#f4f4f4" stroke="#bbb" stroke-width=".5"/><path d="M38.5 25.5h5m-2.5-2.5v5" stroke="#10a010" stroke-width="2"/>
<circle cx="53" cy="25" r="4.5" fill="#5a86b8"/><path d="M51 23l4 4m0-4l-4 4" stroke="#fff" stroke-width="1.2"/>
<rect x="62.5" y="22.5" width="6" height="6" fill="#e8eef0" stroke="#778"/>
<text class="t" x="73" y="28.5" textLength="24" lengthAdjust="spacingAndGlyphs">Precio</text>
<path d="M101 22.5h7M101 25.5h7M101 28.5h7" stroke="#444" stroke-width="1"/>
<rect x="115.5" y="22.5" width="6" height="6" fill="#e8eef0" stroke="#778"/>
<text class="t" x="126.5" y="28.5" textLength="37" lengthAdjust="spacingAndGlyphs">Cierre (W)</text>
<rect x="168.5" y="22.5" width="6" height="6" fill="#8a9aa2" stroke="#667"/>
<text class="t" x="179" y="28.5" textLength="99" lengthAdjust="spacingAndGlyphs">Tunel Domenec v4 (t t t t t)</text>
<rect x="284" y="22" width="1.5" height="7" fill="#c01010"/><rect x="286.5" y="22" width="1.5" height="7" fill="#2020c0"/><rect x="289" y="22" width="1.5" height="7" fill="#c01010"/>
<text class="t" x="294" y="28.5" textLength="81" lengthAdjust="spacingAndGlyphs">Control Total Doc v.6</text>
<rect x="380" y="22" width="7" height="7" fill="#111"/>
<text class="t" x="390" y="28.5" textLength="100" lengthAdjust="spacingAndGlyphs">Multi Avisos (3 f 3 1,5 70 f f)</text>
<rect x="497.5" y="22.5" width="6" height="6" fill="#e8eef0" stroke="#778"/>
<text class="t" x="507" y="28.5" textLength="148" lengthAdjust="spacingAndGlyphs">DS_CotasHist (1 t t t 3 1 1 t f f f f f f f f ...)</text>
<path class="sep" d="M98 20v11M113 20v11M165 20v11M281 20v11M377 20v11M492 20v11"/>

<!-- top bar -->
<rect x="0" y="0" width="1600" height="18" fill="url(#bar)"/>
<rect x="0" y="0" width="1600" height="1" fill="#5f8294"/>
<path d="M7 13v-4M10 13V7M13 12V4M16 10V3" stroke="#1a9a1a" stroke-width="1.6"/><path d="M10 8V6" stroke="#d02020" stroke-width="1.6"/>
<path d="M22 1v16" class="sep"/>
<rect x="24" y="4" width="5" height="4" fill="#788c96"/><rect x="24" y="10" width="5" height="4" fill="#788c96"/>
<path d="M31 1v16" class="sep"/>
<text x="36" y="12.5" font-size="9" fill="#222" textLength="44" lengthAdjust="spacingAndGlyphs">HANGSENG</text>
<path d="M84 8l2.5 2.5L89 8" stroke="#444" fill="none"/>
<path d="M94 1v16" class="sep"/>
<g>
<rect class="btn" x="97.5" y="3.5" width="16" height="12" rx="2"/><text class="x" x="105.5" y="12.5" style="font-weight:normal">12s</text>
<rect class="btn" x="118" y="3.5" width="20" height="12" rx="2"/><text class="x" x="128" y="12.5" style="font-weight:normal">144s</text>
<rect class="btn" x="141.5" y="3.5" width="15" height="12" rx="2"/><text class="x" x="149" y="12.5" style="font-weight:normal">1m</text>
<rect class="btn" x="160" y="3.5" width="19" height="12" rx="2"/><text class="x" x="169.5" y="12.5" style="font-weight:normal">12m</text>
<rect class="btn" x="182.5" y="3.5" width="19" height="12" rx="2"/><text class="x" x="192" y="12.5" style="font-weight:normal">56m</text>
<rect class="btn" x="205" y="3.5" width="14" height="12" rx="2"/><text class="x" x="212" y="12.5" style="font-weight:normal">1h</text>
<rect class="btn" x="222.5" y="3.5" width="14" height="12" rx="2"/><text class="x" x="229.5" y="12.5" style="font-weight:normal">4h</text>
<rect class="btn" x="240" y="3.5" width="10" height="12" rx="2"/><text class="x" x="245" y="12.5" style="font-weight:normal">D</text>
<rect class="btn" x="253" y="3.5" width="12" height="12" rx="2"/><text class="x" x="259" y="12.5" style="font-weight:normal">W</text>
<rect class="btn" x="267.5" y="3.5" width="10" height="12" rx="2"/><text class="x" x="272.5" y="12.5" style="font-weight:normal">M</text>
<rect class="act" x="280.5" y="3.5" width="11" height="12" rx="2"/><text class="x" x="286" y="12.5">Q</text>
</g>
<path d="M294 1v16" class="sep"/>
<text class="t" x="298" y="12.5" textLength="39" lengthAdjust="spacingAndGlyphs">1 trimestre</text>
<path d="M343 8l2.5 2.5L348 8" stroke="#444" fill="none"/>
<path d="M352 1v16" class="sep"/>
<rect class="btn" x="355" y="3.5" width="18" height="12" rx="2"/><text class="x" x="364" y="12.5" style="font-weight:normal">5kU</text>
<rect class="act" x="376" y="3.5" width="22" height="12" rx="2"/><text class="x" x="387" y="12.5" style="font-weight:normal">10kU</text>
<rect class="btn" x="402" y="3.5" width="23" height="12" rx="2"/><text class="x" x="413.5" y="12.5" style="font-weight:normal">35kU</text>
<path d="M429 1v16" class="sep"/>
<text class="t" x="433" y="12.5" textLength="52" lengthAdjust="spacingAndGlyphs">10 k unidades</text>
<path d="M489 8l2.5 2.5L494 8" stroke="#444" fill="none"/>
<path d="M499 1v16" class="sep"/>
<path d="M503 7q3-4 6-1t7 0" stroke="#30a030" stroke-width="1.2" fill="none"/><path d="M503 10q3 3 6 0t7 1" stroke="#d84040" stroke-width="1.2" fill="none"/><rect x="503" y="13" width="2" height="3" fill="#d04040"/><rect x="507" y="12" width="2" height="4" fill="#30a030"/><rect x="511" y="13" width="2" height="3" fill="#30a030"/>
<text class="t" x="520" y="12.5" textLength="46" lengthAdjust="spacingAndGlyphs">Indicadores</text>
<rect class="btn" x="570" y="3.5" width="10" height="12" rx="1"/><path d="M572.5 8l2.5 2.5L577.5 8" stroke="#444" fill="none"/>
<path d="M584 1v16" class="sep"/>
<rect x="588" y="5" width="7" height="9" fill="#e4eef2" stroke="#8aa"/><path d="M590.5 7v5M592.5 7v5" stroke="#667"/>
<circle cx="604" cy="9.5" r="2.5" fill="#7d9099"/>
<rect x="613.5" y="3" width="33.5" height="13" fill="#3fe03f"/><text x="616" y="12.5" font-size="8.5" fill="#fff" textLength="29" lengthAdjust="spacingAndGlyphs">+0,34 %</text>
<text class="t" x="650.5" y="12.5" textLength="41" lengthAdjust="spacingAndGlyphs">20 feb 2026</text>
<text class="t" x="695" y="12.5" textLength="97" lengthAdjust="spacingAndGlyphs">Hong Kong HS50 Cash ($1)</text>
<path d="M1547 1v16M1562 1v16" class="sep"/>
<path d="M1550 7q3-4 7-2" stroke="#e04040" stroke-width="2" fill="none"/><path d="M1551 10h-2.500l3-3.500 2.500 3.500z" fill="#e04040"/>
<path d="M1560 11q-3 4-7 2" stroke="#20a020" stroke-width="2" fill="none"/><path d="M1559 8h2.500l-3 3.500-2.500-3.500z" fill="#20a020"/>
<path d="M1567 12h7" stroke="#7d93a0" stroke-width="2"/>
<rect x="1580" y="7" width="6" height="5" fill="none" stroke="#7d93a0" stroke-width="1.2"/><rect x="1582" y="5" width="6" height="5" fill="none" stroke="#7d93a0" stroke-width="1.2"/>
<path d="M1591 5l7 8m0-8l-7 8" stroke="#7d93a0" stroke-width="1.8"/>

<!-- bottom bar -->
<rect x="0" y="844" width="1600" height="17" fill="url(#bar)"/>
<rect x="0" y="844" width="1600" height="1" fill="#5f8294"/>
<rect x="122" y="846.500" width="1350" height="12" fill="#c0dae6" stroke="#88a8b8"/>
<rect x="123" y="847" width="10" height="11" fill="#dce9ef" stroke="#88a8b8"/><path d="M129.500 850l-3 2.500 3 2.500z" fill="#333"/>
<rect x="135" y="847" width="31" height="11" fill="#a8c6d3" stroke="#88a8b8"/>
<rect x="1463" y="847" width="9" height="11" fill="#dce9ef" stroke="#88a8b8"/><path d="M1466 850l3 2.500-3 2.500z" fill="#333"/>
<g fill="none">
<path d="M27 852l8-4M27 852l8 5" stroke="#eef4f8" stroke-width="1.5"/><circle cx="27" cy="852" r="2" fill="#eef4f8"/><circle cx="35" cy="848" r="2" fill="#eef4f8"/><circle cx="35" cy="857" r="2" fill="#eef4f8"/>
<rect x="46" y="848" width="10" height="9" rx="1" fill="#3a8ad0"/>
<rect x="63" y="847" width="8" height="11" fill="#f4f4f4" stroke="#555" stroke-width=".7"/><path d="M64.500 850h5M64.500 853h5" stroke="#d04040"/><path d="M64.500 855.500h5" stroke="#309030"/>
<rect x="80" y="847" width="9" height="11" fill="#50b050"/><path d="M80 851h9M80 855h9" stroke="#d04040" stroke-width="1.5"/>
<rect x="97" y="847" width="10" height="11" fill="#dfe8f0" stroke="#3a70b0"/><path d="M99 855l2-3 2 2 2-4" stroke="#30a030"/>
</g>
<text x="113" y="856" font-size="10" fill="#5a7a8a">«</text>
<path d="M1481 852l3-3v2h3a3 3 0 0 1 0 7" stroke="#7f9fc8" stroke-width="1.8" fill="none"/>
<path d="M1508 852l-3-3v2h-3a3 3 0 0 0 0 7" stroke="#7f9fc8" stroke-width="1.8" fill="none"/>
<path d="M1519 857l5-9" stroke="#d03030" stroke-width="2" fill="none"/><path d="M1523 857l4-8" stroke="#20a020" stroke-width="2" fill="none"/><rect x="1518" y="851" width="4" height="4" fill="none" stroke="#444"/>
<g fill="none" stroke="#2a3a4a" stroke-width="1.3">
<circle cx="1537" cy="851" r="3.5"/><path d="M1540 854l3 4"/><path d="M1546 848v9" stroke="#2040c0"/>
<circle cx="1557" cy="851" r="3.5"/><path d="M1560 854l3 4"/>
<circle cx="1575" cy="851" r="3.5"/><path d="M1578 854l3 4"/>
<path d="M1591 848h8M1593 851h4M1595 851v7"/>
</g>
<path d="M1555 851h4" stroke="#2040c0" stroke-width="1.2"/><path d="M1573 851h4M1575 849v4" stroke="#2040c0" stroke-width="1.2"/>

<!-- left toolbar -->
<rect x="0" y="18" width="23" height="826" fill="#9dbccc"/>
<rect x="0" y="18" width="1.5" height="843" fill="#5f8294"/>
<rect x="22" y="18" width="1" height="826" fill="#7e9eae"/>
<rect x="1.5" y="19.5" width="20.5" height="11" fill="#b5d0dc"/><path d="M9 26l3-3 3 3" stroke="#6a8a9a" fill="none"/>
<rect x="3" y="30" width="17" height="19" fill="#8ea7b3" stroke="#76909c"/>
<path d="M9 33v10l2.500-2.500 2 4 1.500-.8-2-3.800h3.500z" fill="#b9ccd6" stroke="#5a7482" stroke-width=".7"/>
<g fill="none" stroke="#47606e" stroke-width="1.2">
<circle cx="11" cy="55" r="3.5"/><path d="M13.500 58l3.500 3.500"/>
<circle cx="11" cy="73" r="3.5" stroke="#3a8ac0"/><path d="M13.500 76l3.500 3.500" stroke="#3a8ac0"/>
</g>
<g>
<path d="M7 99q0-5 5-6 5 1 5 6l2 2H5z" fill="#e2c318" stroke="#7a6a10" stroke-width=".6"/><path d="M15 90l5 5m0-5l-5 5" stroke="#222"/>
<path d="M7 117q0-6 5-7 5 1 5 7l2 2H5z" fill="#f0d820" stroke="#a08a10" stroke-width=".6"/>
<path d="M5 137l3-7 2 4h8" stroke="#2030c0" stroke-width="1.2" fill="none"/><text x="15" y="138" font-size="7" font-weight="bold" fill="#2040e0">F</text>
<path d="M7 150h8" stroke="#9a8a9a" stroke-width="2"/><text x="15" y="156" font-size="7" font-weight="bold" fill="#2040e0">F</text>
<rect x="6.500" y="164.500" width="11" height="7" fill="none" stroke="#2050e0" stroke-width="1.2"/><circle cx="17.500" cy="164.500" r="1.300" fill="#2040c0"/><circle cx="6.500" cy="171.500" r="1.300" fill="#2040c0"/>
<rect x="6.500" y="182.500" width="11" height="7" fill="#9aa" stroke="#e02020" stroke-width="1.2"/><circle cx="17.500" cy="182.500" r="1.300" fill="#2040c0"/><circle cx="6.500" cy="189.500" r="1.300" fill="#2040c0"/>
<path d="M8 208l7-7" stroke="#111" stroke-width="1.8"/><path d="M17 199l-5 1 4 4z" fill="#111"/><circle cx="8" cy="208" r="1.5" fill="none" stroke="#333"/>
<rect x="6.500" y="217" width="11" height="10" rx="2" fill="#c8d8e0" stroke="#3a70d0"/><text x="12" y="226" font-size="9" font-weight="bold" fill="#111" text-anchor="middle">T</text>
<circle cx="12" cy="241" r="5.5" fill="#c8e8d0" stroke="#3a80e0"/><text x="12" y="244.500" font-size="9" font-weight="bold" fill="#108010" text-anchor="middle">T</text>
<path d="M8 263l8-8" stroke="#444"/><circle cx="8" cy="263" r="1.5" fill="none" stroke="#333"/><circle cx="16" cy="255" r="1.5" fill="none" stroke="#333"/>
<path d="M11 277h9" stroke="#9be89b" stroke-width="1.5"/><circle cx="11" cy="277" r="1.5" fill="none" stroke="#9be89b"/>
<path d="M11 296h9" stroke="#30c030" stroke-width="1.5"/><circle cx="11" cy="296" r="1.5" fill="none" stroke="#208020"/>
<path d="M11 314h9" stroke="#107010" stroke-width="1.5"/><circle cx="11" cy="314" r="1.5" fill="none" stroke="#107010"/>
<path d="M11 333h9" stroke="#e01010" stroke-width="1.5"/><circle cx="11" cy="333" r="1.5" fill="none" stroke="#e01010"/>
<path d="M6 355l12-12 2 2-12 12z" fill="#a8bcc8" stroke="#6c8494"/>
<path d="M6 378v-12M18 378v-12" stroke="#7a9a9a"/><path d="M6 373l4-3 3 2 5-4" stroke="#30a030" fill="none"/><path d="M6 376l4-2 3 1 5-2" stroke="#c06060" fill="none"/>
<ellipse cx="12" cy="387" rx="5.500" ry="4" fill="#9fb5c3" stroke="#e02020" stroke-width="1.2"/><circle cx="18" cy="384" r="1.200" fill="#2040c0"/><circle cx="6" cy="391" r="1.200" fill="#2040c0"/>
<ellipse cx="12" cy="405" rx="5.500" ry="4" fill="#a8a090" stroke="#9a7a50" stroke-width="1.2"/><circle cx="18" cy="402" r="1.200" fill="#2040c0"/><circle cx="6" cy="409" r="1.200" fill="#2040c0"/>
<ellipse cx="12" cy="424" rx="5.500" ry="4" fill="#70a878" stroke="#208040" stroke-width="1.2"/><circle cx="18" cy="421" r="1.200" fill="#2040c0"/><circle cx="6" cy="428" r="1.200" fill="#2040c0"/>
<ellipse cx="12" cy="443" rx="5.500" ry="4" fill="#90e890" stroke="#10d810" stroke-width="1.2"/><circle cx="18" cy="440" r="1.200" fill="#2040c0"/><circle cx="6" cy="447" r="1.200" fill="#2040c0"/>
<path d="M5 469l14-14" stroke="#222" stroke-width="1"/>
<path d="M5 487l14-14" stroke="#30c030" stroke-width="1.2"/>
<path d="M5 506l14-14" stroke="#f01010" stroke-width="1.2"/>
<path d="M4 517h15" stroke="#5a6a72" stroke-width="2"/>
<path d="M4 535h15" stroke="#e89a90" stroke-width="2"/>
<path d="M4 553h15" stroke="#10e010" stroke-width="2"/>
<path d="M4 572h15" stroke="#107010" stroke-width="2"/>
<path d="M4 590h15" stroke="#f01010" stroke-width="2"/>
<path d="M4 608h15" stroke="#70a0f0" stroke-width="2"/>
<path d="M4 627h15" stroke="#1010b0" stroke-width="2"/>
<path d="M12 637v16" stroke="#4a5a62" stroke-width="1.6"/>
<path d="M5 668l10-10M5 668h12" stroke="#d07070" stroke-width="1" fill="none"/><text x="15" y="664" font-size="6" fill="#2040c0">o</text><circle cx="12" cy="664" r="1.300" fill="#2040c0"/>
<circle cx="11" cy="681" r="5" fill="none" stroke="#e08040" stroke-width="1.2"/><path d="M9 681h4M11 679v4" stroke="#2040c0"/>
<path d="M5 693l12 13M5 706l12-13M8 693l2 13M14 693l-2 13" stroke="#3a60e0" stroke-width=".9" fill="none"/>
<path d="M6 712l6 12M12 712l6 12" stroke="#3a60e0" stroke-width=".9" fill="none"/><circle cx="7" cy="722" r="1.200" fill="#2040c0"/><circle cx="15" cy="713" r="1.200" fill="#2040c0"/>
<path d="M6 736l3 5 8-10" stroke="#1fa81f" stroke-width="3" fill="none"/>
<path d="M6 752h3v9H6zM10 752l3-5q2 0 1.500 3l-.5 2h4l-1 9h-7z" fill="#3caf3c"/>
<path d="M6 769l11 11m0-11L6 780" stroke="#e01010" stroke-width="3.600"/>
<path d="M11 786h2l2 3H9z" fill="#e8a020"/>
<rect x="1.500" y="789" width="20.500" height="10" fill="#b5d0dc"/><path d="M9 793l3 3 3-3" stroke="#5a7a8a" fill="none"/>
<circle cx="8" cy="806" r="3" fill="#148a14"/><rect x="9" y="806" width="7" height="9" fill="#f0f0f0" stroke="#777" stroke-width=".7"/><circle cx="16" cy="815" r="2.500" fill="#555"/>
<path d="M7 832h1M10.500 832h1M14 832h1" stroke="#333" stroke-width="2"/><path d="M14 836l3 0-1.500 2z" fill="#333"/>
<path d="M4 859l4-12 3 8 3-8 2 8" stroke="#d04040" stroke-width="1.300" fill="none"/><path d="M12 857l7-9" stroke="#e8b020" stroke-width="2.200"/>
</g>
</svg>
</body></html>
